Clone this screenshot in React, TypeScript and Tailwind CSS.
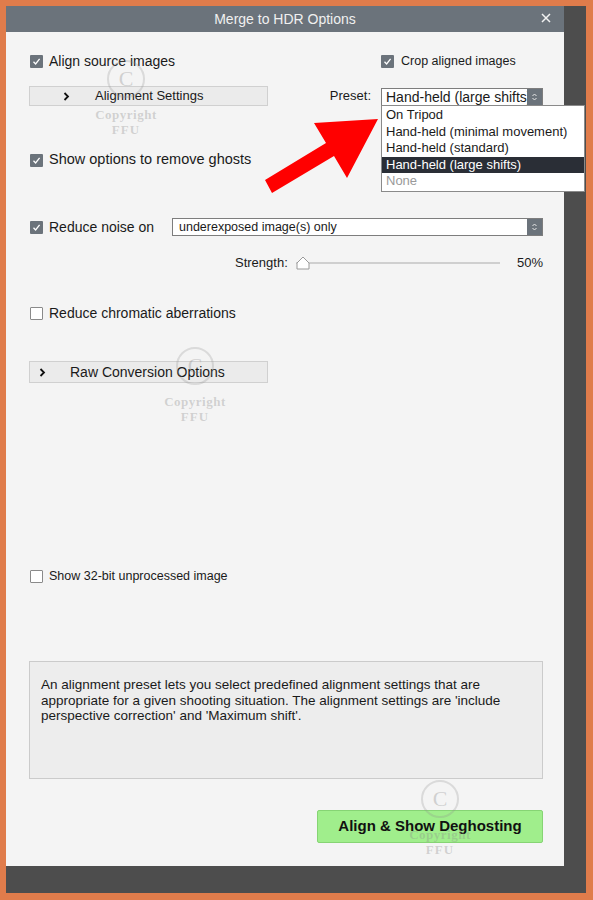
import React from 'react';

const font = { fontFamily: '"Liberation Sans", Arial, sans-serif' };

function Check({ checked = true }: { checked?: boolean }) {
  if (!checked) {
    return <span className="block w-[13px] h-[13px] shrink-0 bg-white border border-[#8a8a8a] rounded-[1px]" />;
  }
  return (
    <span className="flex items-center justify-center w-[13px] h-[13px] shrink-0 bg-[#6b737b] rounded-[1px]">
      <svg width="9" height="9" viewBox="0 0 9 9" fill="none">
        <path d="M1.5 4.8 L3.6 7 L7.6 1.8" stroke="#ffffff" strokeWidth="1.3" />
      </svg>
    </span>
  );
}

function Stepper() {
  return (
    <span className="flex items-center justify-center w-[15px] h-full bg-[#6b737b] shrink-0">
      <svg width="7" height="10" viewBox="0 0 7 10" fill="none">
        <path d="M1.5 4 L3.5 2 L5.5 4 M1.5 6 L3.5 8 L5.5 6" stroke="#e8e8e8" strokeWidth="1" />
      </svg>
    </span>
  );
}

function Chevron() {
  return (
    <svg width="7" height="9" viewBox="0 0 7 9" fill="none">
      <path d="M1.5 1 L5 4.5 L1.5 8" stroke="#111" strokeWidth="1.8" />
    </svg>
  );
}

function Watermark({ x, y }: { x: number; y: number }) {
  return (
    <div
      className="absolute pointer-events-none flex flex-col items-center text-[rgba(140,140,140,0.35)]"
      style={{ left: x, top: y, width: 80, fontFamily: '"Liberation Serif", serif' }}
    >
      <div className="w-[38px] h-[38px] rounded-full border-2 border-[rgba(140,140,140,0.25)] flex items-center justify-center text-[22px] leading-none">
        C
      </div>
      <div className="mt-[9px] text-[13px] font-bold leading-[15px] tracking-[0.5px]">Copyright</div>
      <div className="text-[13px] font-bold leading-[15px] tracking-[1px]">FFU</div>
    </div>
  );
}

const presets = ['On Tripod', 'Hand-held (minimal movement)', 'Hand-held (standard)', 'Hand-held (large shifts)', 'None'];

export default function App() {
  return (
    <div className="relative w-[593px] h-[900px] bg-[#e07c4b] pt-[6px] pl-[6px] pr-[7px] pb-[7px] text-[#1a1a1a]" style={font}>
      <div className="flex h-full bg-[#4d4d4d]">
        <div className="w-[558px] h-[860px] flex flex-col">
          {/* title bar */}
          <div className="relative h-[26px] bg-[#6b737b] flex items-center justify-center">
            <span className="text-[14px] text-[#f0f0f0]">Merge to HDR Options</span>
            <svg className="absolute right-[13px] top-[7px]" width="10" height="10" viewBox="0 0 10 10">
              <path d="M1 1 L9 9 M9 1 L1 9" stroke="#f2f2f2" strokeWidth="1.5" />
            </svg>
          </div>

          {/* body */}
          <div className="flex-1 bg-[#f4f4f4] pl-[23px] pr-[21px] flex flex-col">
            <div className="mt-[19px] h-[20px] flex items-center">
              <div className="flex items-center gap-[6px] ml-[1px]">
                <Check />
                <span className="text-[14px]">Align source images</span>
              </div>
              <div className="ml-auto w-[162px] flex items-center gap-[7px]">
                <Check />
                <span className="text-[12.5px]">Crop aligned images</span>
              </div>
            </div>

            <div className="mt-[15px] h-[20px] flex items-center">
              <div className="w-[239px] h-[20px] bg-[#ebebeb] border border-[#d0d0d0] flex items-center pl-[33px]">
                <Chevron />
                <span className="ml-[25px] text-[13px]">Alignment Settings</span>
              </div>
              <span className="ml-auto text-[13px] mr-[10px]">Preset:</span>
              <div className="relative w-[162px] h-[18px] mt-[2px] bg-white border border-[#7d7d7d] flex">
                <span className="flex-1 pl-[4px] text-[14px] leading-[16px] whitespace-nowrap overflow-hidden">Hand-held (large shifts)</span>
                <Stepper />
                <div className="absolute left-[-1px] top-[16px] w-[204px] bg-white border border-[#8a8a8a] z-10 py-[1px]">
                  {presets.map((p, i) => (
                    <div
                      key={p}
                      className={
                        i === 3
                          ? 'h-[16.5px] pl-[4px] text-[13px] leading-[16px] bg-[#2a2e36] text-white'
                          : i === 4
                          ? 'h-[16.5px] pl-[4px] text-[13px] leading-[16px] text-[#9a9a9a]'
                          : 'h-[16.5px] pl-[4px] text-[13px] leading-[16px] text-[#1a1a1a]'
                      }
                    >
                      {p}
                    </div>
                  ))}
                </div>
              </div>
            </div>

            <div className="mt-[44px] h-[20px] flex items-center gap-[6px] ml-[1px]">
              <Check />
              <span className="text-[14.5px]">Show options to remove ghosts</span>
            </div>

            <div className="mt-[47px] h-[20px] flex items-center">
              <div className="w-[143px] flex items-center gap-[6px] pl-[1px]">
                <Check />
                <span className="text-[14px]">Reduce noise on</span>
              </div>
              <div className="flex-1 h-[18px] bg-white border border-[#7d7d7d] flex">
                <span className="flex-1 pl-[6px] text-[12.5px] leading-[16px]">underexposed image(s) only</span>
                <Stepper />
              </div>
            </div>

            <div className="mt-[16px] h-[20px] flex items-center">
              <span className="ml-[206px] text-[13px]">Strength:</span>
              <div className="relative ml-[8px] w-[204px] h-[14px] flex items-center">
                <div className="w-full h-[2px] bg-[#cfcfcf]" />
                <svg className="absolute left-0 top-0" width="14" height="14" viewBox="0 0 14 14">
                  <path d="M1 13 L1 7 L7 1 L13 7 L13 13 Z" fill="#ffffff" stroke="#9a9a9a" strokeWidth="1" strokeLinejoin="round" />
                </svg>
              </div>
              <span className="ml-auto text-[13px]">50%</span>
            </div>

            <div className="mt-[30px] h-[20px] flex items-center gap-[6px] ml-[1px]">
              <Check checked={false} />
              <span className="text-[14px]">Reduce chromatic aberrations</span>
            </div>

            <div className="mt-[38px] w-[239px] h-[22px] bg-[#ebebeb] border border-[#d0d0d0] flex items-center pl-[9px]">
              <Chevron />
              <span className="ml-[24px] text-[14px]">Raw Conversion Options</span>
            </div>

            <div className="mt-[183px] h-[20px] flex items-center gap-[6px] ml-[1px]">
              <Check checked={false} />
              <span className="text-[12.5px]">Show 32-bit unprocessed image</span>
            </div>

            <div className="mt-[75px] h-[118px] bg-[#ededed] border border-[#cbcbcb] pl-[11px] pr-[27px] pt-[15px] text-[13.5px] leading-[15.5px]">
              An alignment preset lets you select predefined alignment settings that are appropriate for a given shooting situation. The alignment settings are 'include perspective correction' and 'Maximum shift'.
            </div>

            <div className="mt-[31px] self-end w-[226px] h-[33px] bg-[#a0ee8c] border border-[#86d474] rounded-[2px] flex items-center justify-center text-[15px] font-bold text-[#111]">
              Align &amp; Show Deghosting
            </div>
          </div>
        </div>
      </div>

      {/* red arrow pointing at preset list */}
      <svg className="absolute left-0 top-0 pointer-events-none" width="593" height="900">
        <polygon points="265,180 326,143 314,123 378,119 347,178 334,156 272,193" fill="#ff0000" />
      </svg>

      <Watermark x={86} y={60} />
      <Watermark x={155} y={347} />
      <Watermark x={400} y={780} />
    </div>
  );
}
